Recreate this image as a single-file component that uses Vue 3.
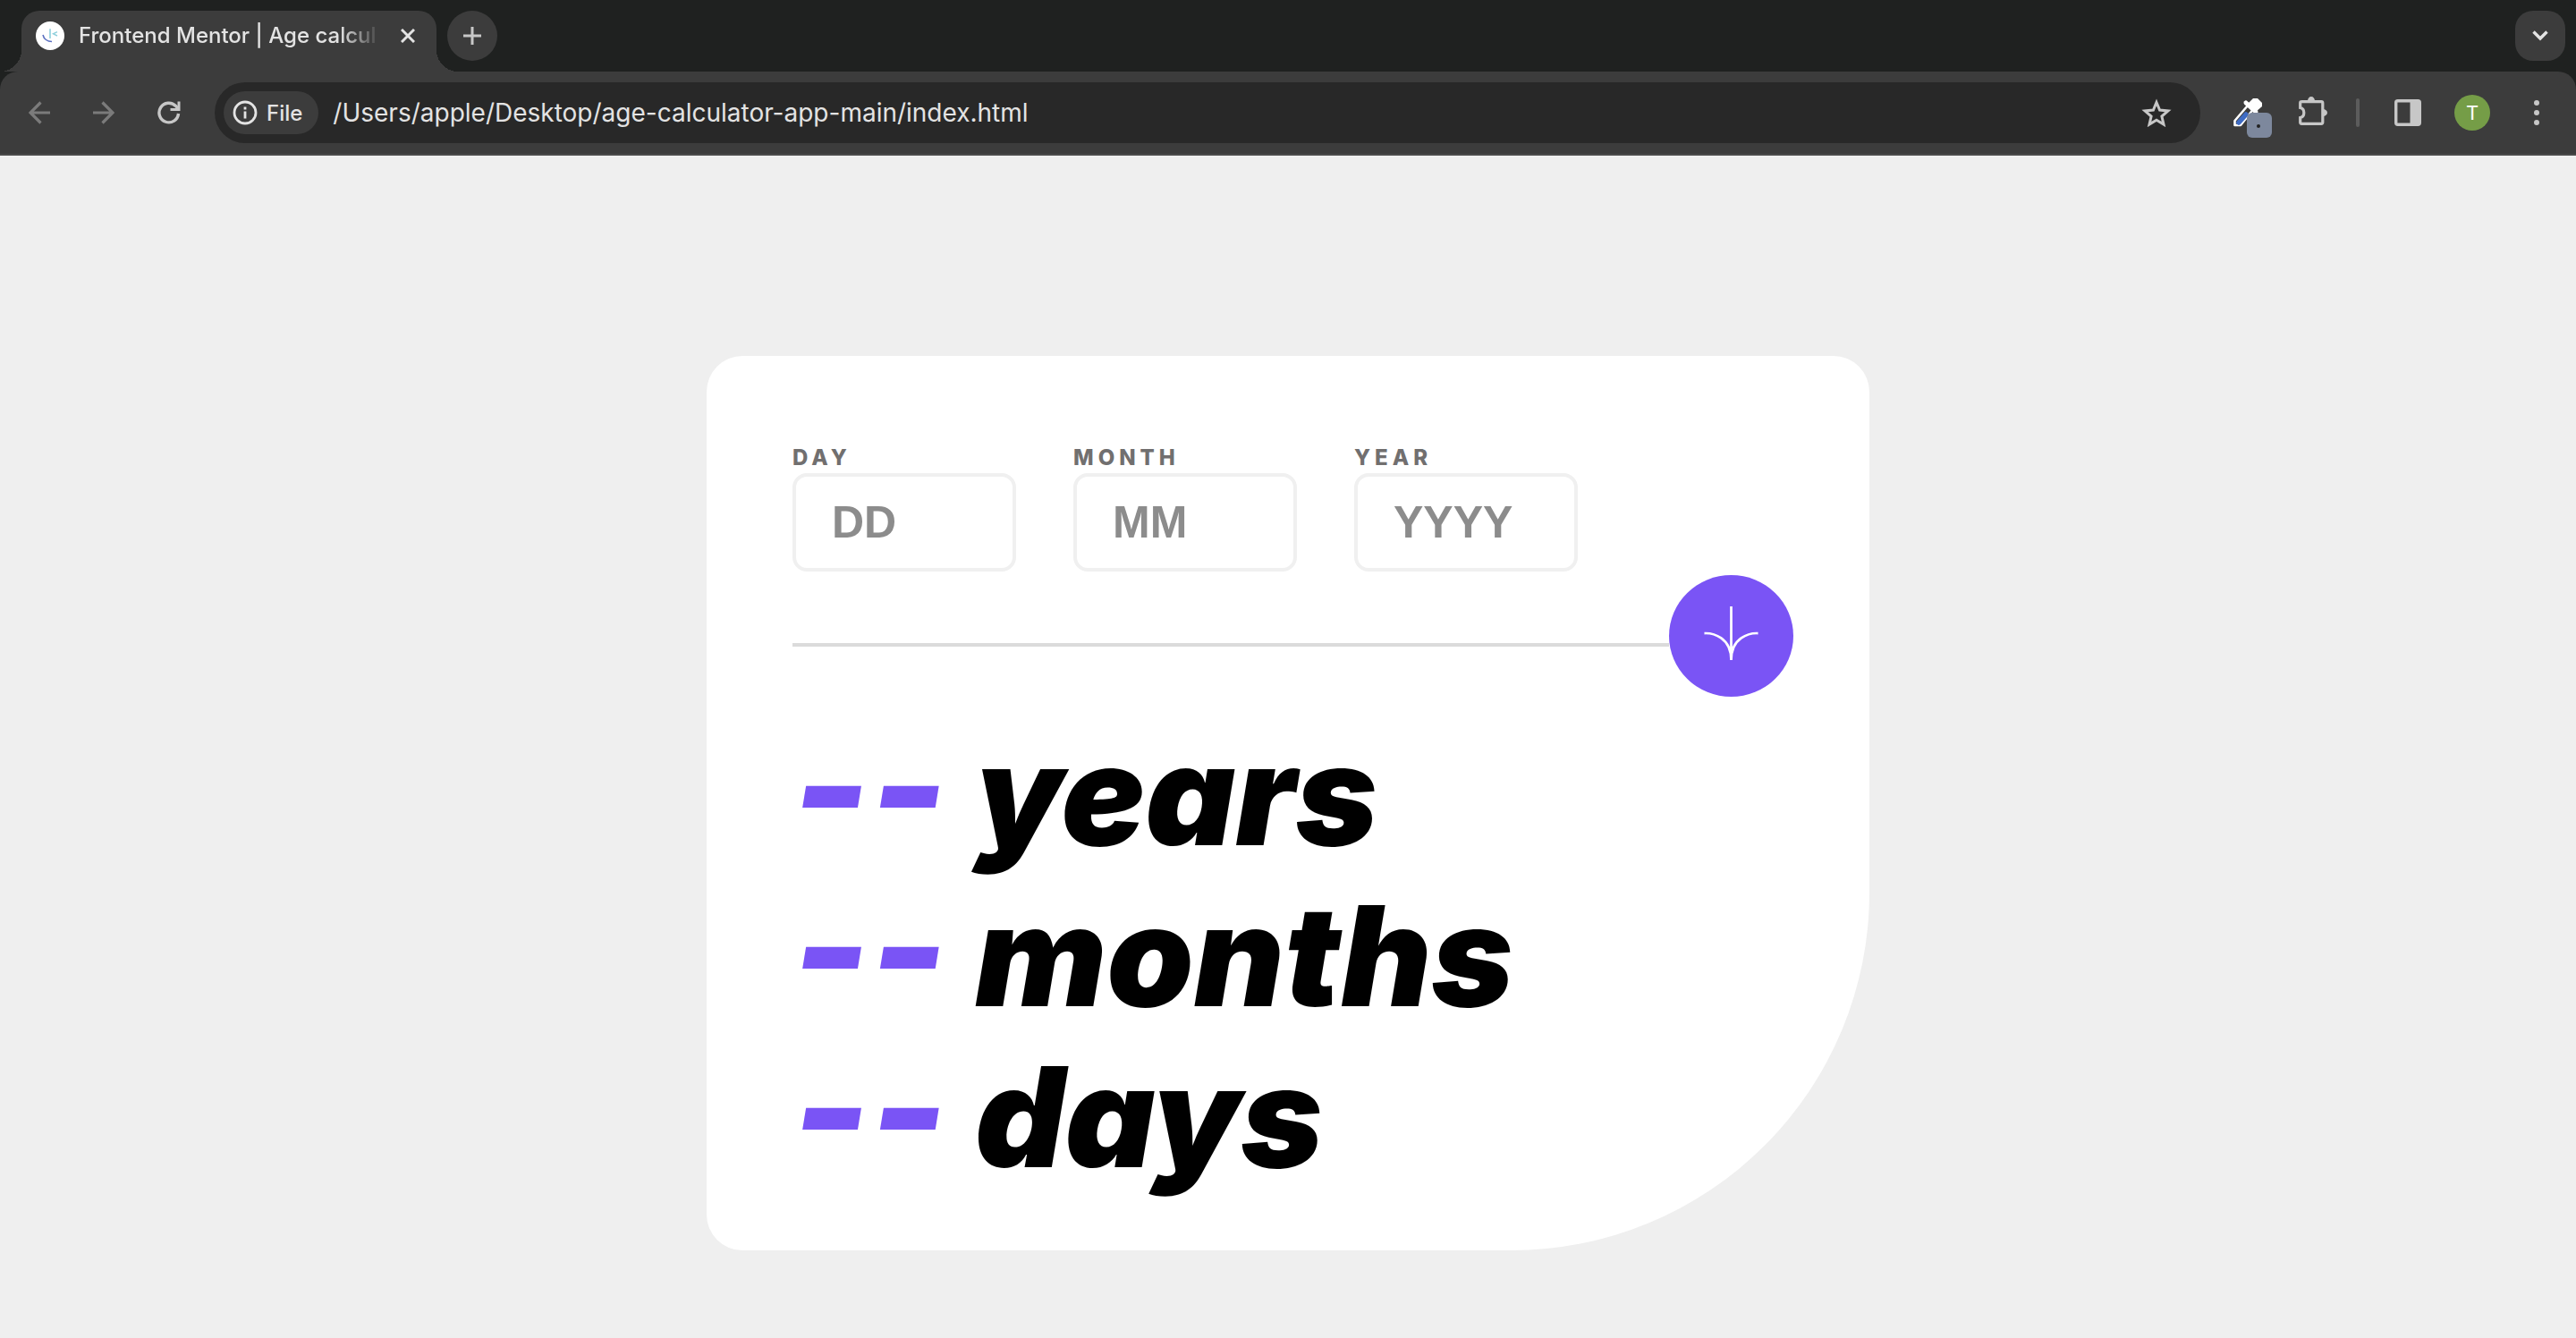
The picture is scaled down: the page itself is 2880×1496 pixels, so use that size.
<script setup>
import { ref } from 'vue'

const address = ref('/Users/apple/Desktop/age-calculator-app-main/index.html')

const fields = ref([
  { id: 'day', label: 'DAY', placeholder: 'DD', value: '' },
  { id: 'month', label: 'MONTH', placeholder: 'MM', value: '' },
  { id: 'year', label: 'YEAR', placeholder: 'YYYY', value: '' },
])

const results = ref([
  { unit: 'years', value: '--' },
  { unit: 'months', value: '--' },
  { unit: 'days', value: '--' },
])
</script>

<template>
  <div class="window">
    <header class="chrome">
      <div class="tabstrip">
        <div class="tab">
          <svg class="favicon" viewBox="0 0 32 32" aria-hidden="true">
            <circle cx="16" cy="16" r="16" fill="#fff" />
            <path d="M16 8.300v10.700" stroke="#8fd0dc" stroke-width="1.600" fill="none" />
            <path d="M24 11.600l-4.500 2.200 4.500 2.200" stroke="#8fd0dc" stroke-width="1.400" fill="none" />
            <path d="M8 15c1 4.500 5 7.500 10 7.500" stroke="#5b6fc0" stroke-width="1.600" fill="none" />
          </svg>
          <span class="tab-title">Frontend Mentor | Age calcul</span>
          <button class="icon-button close" type="button" aria-label="Close tab">
            <svg width="16" height="16" viewBox="0 0 16 16"><path d="M1 1l14 14M15 1L1 15" stroke="#e3e3e3" stroke-width="3" /></svg>
          </button>
        </div>
        <button class="icon-button new-tab" type="button" aria-label="New tab">
          <svg width="20" height="20" viewBox="0 0 20 20"><path d="M10 0v20M0 10h20" stroke="#c7c7c7" stroke-width="3" /></svg>
        </button>
        <button class="icon-button tab-search" type="button" aria-label="Search tabs">
          <svg width="18" height="12" viewBox="0 0 18 12"><path d="M1.500 1.500L9 9l7.500-7.500" fill="none" stroke="#e3e3e3" stroke-width="3.400" /></svg>
        </button>
      </div>

      <div class="toolbar">
        <nav class="history">
          <button class="icon-button" type="button" aria-label="Back">
            <svg width="24" height="26" viewBox="0 0 24 26"><path d="M24 13H2M13.500 1.500L2 13l11.500 11.500" fill="none" stroke="#7b7b7b" stroke-width="3.200" /></svg>
          </button>
          <button class="icon-button" type="button" aria-label="Forward">
            <svg width="24" height="26" viewBox="0 0 24 26"><path d="M0 13h22M10.500 1.500L22 13 10.500 24.500" fill="none" stroke="#7b7b7b" stroke-width="3.200" /></svg>
          </button>
          <button class="icon-button" type="button" aria-label="Reload">
            <svg width="26" height="26" viewBox="0 0 26 26">
              <path d="M23.500 14A10.800 10.800 0 1 1 20.500 5.500L23.500 9" fill="none" stroke="#c7c7c7" stroke-width="3.400" />
              <path d="M24 .500V9.500H14.500" fill="none" stroke="#c7c7c7" stroke-width="3" />
            </svg>
          </button>
        </nav>

        <div class="omnibox">
          <button class="chip" type="button">
            <svg width="28" height="28" viewBox="0 0 28 28">
              <circle cx="14" cy="14" r="12" fill="none" stroke="#e3e3e3" stroke-width="2.800" />
              <path d="M14 12.500v8M14 7.500v3" stroke="#e3e3e3" stroke-width="2.800" />
            </svg>
            File
          </button>
          <input v-model="address" class="address" type="text" aria-label="Address" spellcheck="false" />
          <button class="icon-button star" type="button" aria-label="Bookmark this page">
            <svg width="34" height="32" viewBox="0 0 34 32">
              <path d="M17 4.500l3.600 8.600 9.300.800-7 6.100 2.100 9.100-8-4.800-8 4.800 2.100-9.100-7-6.100 9.300-.800z" fill="none" stroke="#c7c7c7" stroke-width="3" />
            </svg>
          </button>
        </div>

        <div class="extensions">
          <button class="icon-button" type="button" aria-label="Color picker">
            <svg width="46" height="56" viewBox="0 0 46 56">
              <path d="M4.500 42v-5L19 20l5.500 5L11 42z" fill="#3c3c3c" stroke="#fff" stroke-width="2.600" stroke-linejoin="round" />
              <path d="M9 39l8-9" stroke="#3f6cc4" stroke-width="5.500" stroke-linecap="round" />
              <path d="M17 17l11 10" stroke="#fff" stroke-width="5" stroke-linecap="round" />
              <path d="M20 17l5-5h5l5 5v4l-7 6z" fill="#fff" />
              <rect x="18" y="28" width="28" height="28" rx="6" fill="#7d889d" />
              <circle cx="31" cy="43" r="2" fill="#222" />
            </svg>
          </button>
          <button class="icon-button" type="button" aria-label="Extensions">
            <svg width="34" height="38" viewBox="0 0 34 38">
              <path d="M3 6.700h22.300a1.500 1.500 0 0 1 1.500 1.500v21.600a1.500 1.500 0 0 1-1.500 1.500H3.200a1.500 1.500 0 0 1-1.500-1.500V24.500c5.500-1 5.500-10 0-11V8.200A1.500 1.500 0 0 1 3.200 6.700z" fill="none" stroke="#c7c7c7" stroke-width="3.200" />
              <path d="M10 6a4 5 0 0 1 8 0zM27 15a5 4 0 0 1 0 8z" fill="#c7c7c7" />
            </svg>
          </button>
          <span class="divider"></span>
        </div>
        <div class="actions">
          <button class="icon-button slot" type="button" aria-label="Side panel">
            <svg width="30" height="30" viewBox="0 0 30 30">
              <rect x="1.700" y="1.700" width="26.600" height="26.600" rx="2" fill="none" stroke="#c7c7c7" stroke-width="3.400" />
              <path d="M17.500 1H28v28H17.500z" fill="#c7c7c7" />
            </svg>
          </button>
          <button class="avatar" type="button" aria-label="Profile">T</button>
          <button class="icon-button slot" type="button" aria-label="Menu">
            <svg width="8" height="30" viewBox="0 0 8 30" fill="#c7c7c7"><circle cx="4" cy="4" r="3" /><circle cx="4" cy="15" r="3" /><circle cx="4" cy="26" r="3" /></svg>
          </button>
        </div>
      </div>
    </header>

    <main class="page">
      <section class="card">
        <form @submit.prevent>
          <div class="fields">
            <div v-for="field in fields" :key="field.id" class="field">
              <label :for="field.id">{{ field.label }}</label>
              <input :id="field.id" v-model="field.value" type="text" inputmode="numeric" :placeholder="field.placeholder" />
            </div>
          </div>
          <div class="submit-row">
            <hr />
            <button class="submit" type="submit" aria-label="Calculate age">
              <svg width="63" height="60" viewBox="0 0 46 44" fill="none" stroke="#fff" stroke-width="2">
                <path d="M1 22.019C8.333 21.686 23 25.616 23 44M23 44V0M45 22.019C37.667 21.686 23 25.616 23 44" />
              </svg>
            </button>
          </div>
        </form>
        <div class="results">
          <p v-for="result in results" :key="result.unit">
            <span class="value">{{ result.value }}</span>
            <span>{{ result.unit }}</span>
          </p>
        </div>
      </section>
    </main>
  </div>
</template>

<style>
body {
  margin: 0;
  background: #efefef;
}
</style>

<style scoped>
* {
  box-sizing: border-box;
}

.window {
  display: flex;
  flex-direction: column;
  min-height: 100vh;
  font-family: Inter, Roboto, sans-serif;
}

button {
  padding: 0;
  border: 0;
  background: none;
  font: inherit;
  color: inherit;
}

svg {
  display: block;
  flex: none;
}

.chrome {
  background: #1f2120;
  color: #e3e3e3;
}

.icon-button {
  display: flex;
  flex: none;
  align-items: center;
  justify-content: center;
}

.tabstrip {
  display: flex;
  height: 80px;
  padding: 12px 12px 0 24px;
}

.tab {
  position: relative;
  display: flex;
  align-items: center;
  width: 464px;
  padding: 0 24px 12px 16px;
  border-radius: 20px 20px 0 0;
  background: #3c3c3c;
}

.tab::before,
.tab::after {
  content: '';
  position: absolute;
  bottom: 0;
  width: 24px;
  height: 24px;
}

.tab::before {
  right: 100%;
  background: radial-gradient(circle at 0 0, transparent 24px, #3c3c3c 24px);
}

.tab::after {
  left: 100%;
  background: radial-gradient(circle at 100% 0, transparent 24px, #3c3c3c 24px);
}

.favicon {
  width: 32px;
  height: 32px;
}

.tab-title {
  flex: 1;
  margin: 0 12px 0 16px;
  font-size: 24px;
  font-weight: 500;
  line-height: 32px;
  white-space: nowrap;
  mask-image: linear-gradient(to right, #000 84%, transparent 97%);
}

.new-tab,
.tab-search {
  width: 56px;
  height: 56px;
  background: #3c3c3c;
}

.new-tab {
  margin-left: 12px;
  border-radius: 50%;
}

.tab-search {
  margin-left: auto;
  border-radius: 20px;
}

.toolbar {
  display: flex;
  align-items: center;
  height: 94px;
  padding: 0 28px 0 32px;
  border-bottom: 2px solid #4a4a4a;
  border-radius: 20px 20px 0 0;
  background: #3c3c3c;
}

.history {
  display: flex;
  align-items: center;
  gap: 48px;
}

.omnibox {
  display: flex;
  flex: 1;
  align-items: center;
  height: 68px;
  margin-left: 38px;
  padding: 0 32px 0 10px;
  border-radius: 34px;
  background: #282828;
}

.chip {
  display: flex;
  align-items: center;
  gap: 10px;
  height: 48px;
  padding: 0 18px 0 10px;
  border-radius: 24px;
  background: #3c3c3c;
  font-size: 24px;
  font-weight: 500;
}

.address {
  flex: 1;
  min-width: 0;
  padding: 0 16px;
  border: 0;
  outline: 0;
  background: none;
  color: #e3e3e3;
  font: 400 28px/40px Inter, Roboto, sans-serif;
}

.extensions {
  display: flex;
  align-items: center;
  gap: 30px;
  margin: 0 38px 0 34px;
}

.divider {
  width: 4px;
  height: 32px;
  border-radius: 2px;
  background: #5c5c5c;
}

.actions {
  display: flex;
  align-items: center;
  gap: 36px;
}

.slot {
  width: 32px;
}

.avatar {
  width: 40px;
  height: 40px;
  border-radius: 50%;
  background: #759d47;
  color: #fff;
  font-size: 22px;
}

.page {
  flex: 1;
  padding: 224px 40px 98px;
  background: #efefef;
}

.card {
  max-width: 1300px;
  margin: 0 auto;
  padding: 98px 85px 59px 96px;
  border-radius: 40px 40px 400px 40px;
  background: #fff;
}

.fields {
  display: flex;
  gap: 64px;
}

.field {
  display: flex;
  flex-direction: column;
  gap: 1px;
  width: 250px;
}

.field label {
  color: #716f6f;
  font-size: 24px;
  font-weight: 800;
  line-height: 32px;
  letter-spacing: 5px;
}

.field input {
  width: 100%;
  height: 110px;
  padding: 0 40px;
  border: 4px solid #f0f0f0;
  border-radius: 16px;
  outline: 0;
  background: #fff;
  font: 700 50px 'Liberation Sans', Arial, sans-serif;
}

.field input::placeholder {
  color: #8c8c8c;
  opacity: 1;
}

.submit-row {
  display: flex;
  margin-top: 4px;
}

.submit-row hr {
  flex: 1;
  height: 4px;
  margin: 76px 0 0;
  border: 0;
  background: #dbdbdb;
}

.submit {
  display: flex;
  align-items: center;
  justify-content: center;
  width: 139px;
  height: 136px;
  padding-bottom: 6px;
  border-radius: 50%;
  background: #7a54f5;
}

.results {
  margin-top: 20px;
}

.results p {
  display: grid;
  grid-template-columns: 204px 1fr;
  align-items: baseline;
  margin: 0;
  color: #000;
  font-size: 156px;
  font-style: italic;
  font-weight: 900;
  font-feature-settings: 'cv11';
  line-height: 180px;
}

.results .value {
  color: #7a54f5;
  font-size: 184px;
  font-weight: 800;
  line-height: 120px;
}
</style>
